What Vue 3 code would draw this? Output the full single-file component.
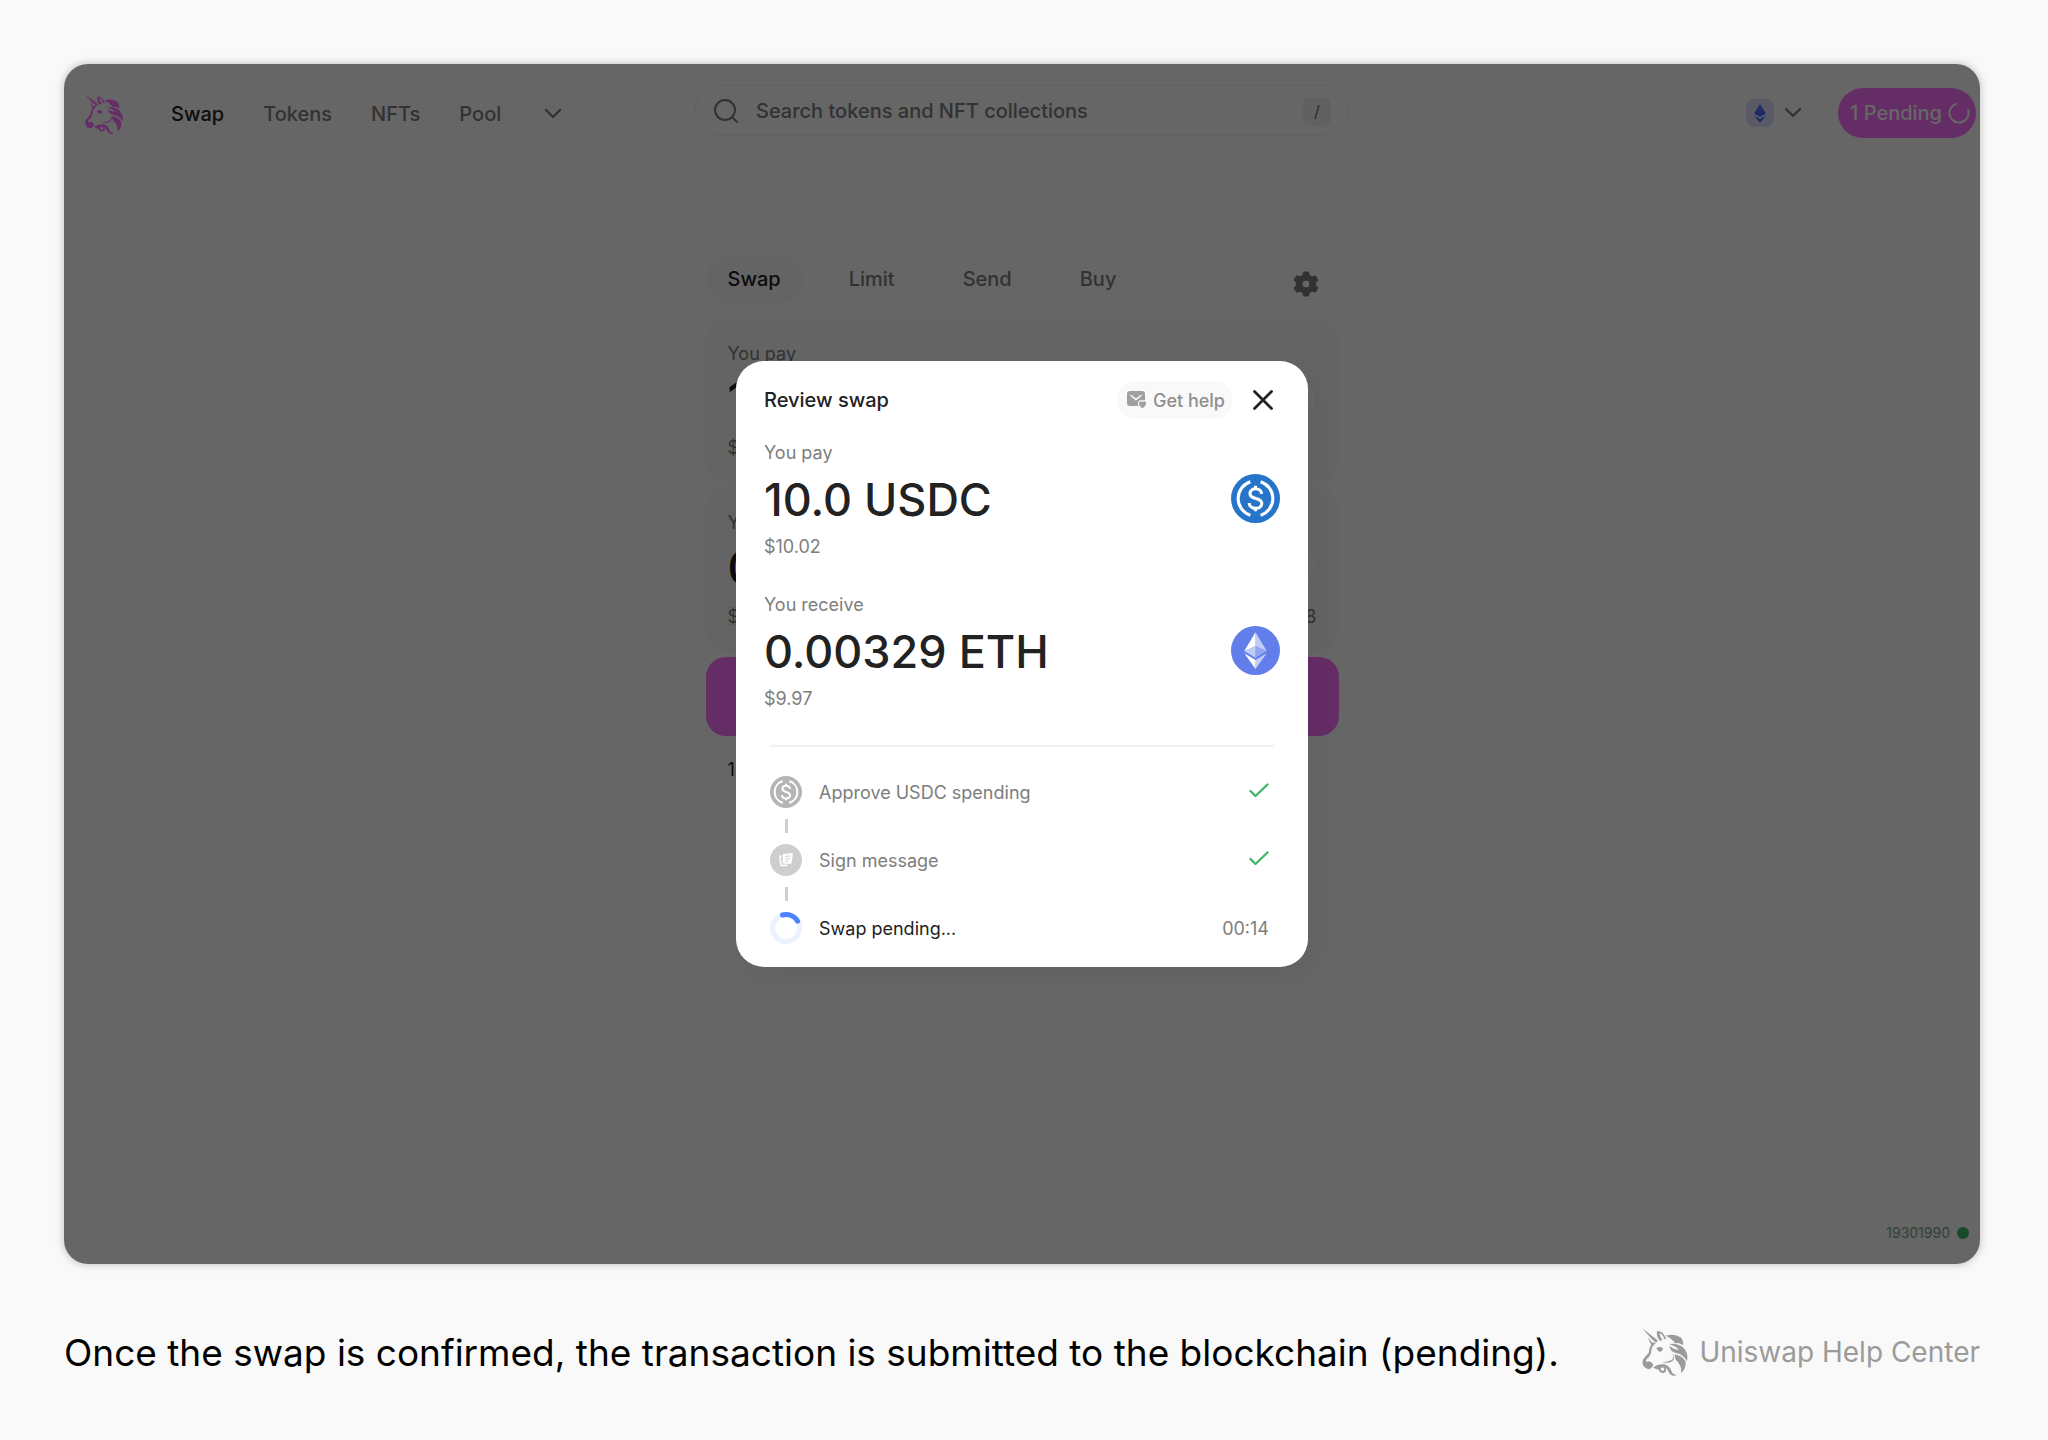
<template>
  <div class="page">
    <svg class="sprite" aria-hidden="true">
      <symbol id="unicorn" viewBox="12 8 134 142">
        <path d="M12 9 L57 44 Q58 49 51 51 Q45 45 39 40 Z"/>
        <path d="M28 37 L46 55 L39 58 Z"/>
        <path fill-rule="evenodd" d="M56 32 Q53 20 57 17 Q74 17 83 42 L76 40 Q74 28 63 23 Q62 30 72 44 L63 45 Q57 40 56 32 Z"/>
        <path d="M45 50 L52 54 Q44 58 40 67 L37 84 Q32 96 24 101 Q20 106 26 108 Q35 103 44 115 Q43 126 33 129 Q21 130 15 120 Q10 111 15 100 L31 81 Q33 60 45 50 Z"/>
        <path d="M54 68 Q62 61 73 68 Q72 78 62 78 Q56 76 54 68 Z"/>
        <path d="M80 31 Q106 23 126 36 Q134 45 133 59 Q121 51 109 53 Q98 38 80 31 Z"/>
        <path d="M92 55 Q120 52 135 68 Q149 84 144 106 Q133 86 112 82 Q95 78 92 61 Q106 72 121 73 Q110 61 92 55 Z"/>
        <path d="M107 86 Q131 90 140 108 Q142 128 127 141 Q129 117 110 101 Z"/>
        <path d="M101 82 Q113 104 94 109 Q84 112 70 110 Q91 107 100 101 Q105 96 101 82 Z"/>
        <path d="M44 125 Q55 114 77 115 Q92 119 97 133 Q101 146 114 147 Q98 154 90 139 Q84 126 81 125 Q86 138 75 141 Q63 142 60 131 Q52 131 44 125 Z M66 129 Q69 137 76 134 Q79 127 72 124 Q67 124 66 129 Z" fill-rule="evenodd"/>
      </symbol>
      <symbol id="chevron" viewBox="0 0 18 12">
        <path d="M2 2 L9 9 L16 2" fill="none" stroke="currentColor" stroke-width="2.4" stroke-linecap="round" stroke-linejoin="round"/>
      </symbol>
      <symbol id="usdc" viewBox="0 0 48 48">
        <circle cx="24" cy="24" r="24" fill="currentColor"/>
        <g fill="none" stroke="#fff" stroke-width="3">
          <path d="M19 7.6 A17.2 17.2 0 0 0 19 40.4 M29 7.6 A17.2 17.2 0 0 1 29 40.4"/>
          <path d="M30 19.5 C29.6 12.8 18.6 13 18.6 19 C18.6 26 30.2 21.8 30.2 29 C30.2 35.2 18 35.4 17.8 28.4 M24 11.5 V15.5 M24 32.5 V36.5"/>
        </g>
      </symbol>
    </svg>

    <main class="frame">
      <header class="nav">
        <nav class="nav__links">
          <a class="nav__logo" href="#" aria-label="Uniswap"><svg><use href="#unicorn"/></svg></a>
          <a v-for="link in links" :key="link" href="#" class="nav__link" :class="{ 'nav__link--active': link === 'Swap' }">{{ link }}</a>
          <button class="nav__more" aria-label="More"><svg width="18" height="12"><use href="#chevron"/></svg></button>
        </nav>
        <label class="search">
          <svg width="24" height="24" viewBox="0 0 24 24" fill="none" stroke="currentColor" stroke-width="2" stroke-linecap="round">
            <circle cx="11" cy="11" r="10"/>
            <path d="M18.5 18.5 L23 23"/>
          </svg>
          <input v-model="query" type="text" placeholder="Search tokens and NFT collections" aria-label="Search tokens and NFT collections">
          <kbd>/</kbd>
        </label>
        <div class="nav__side">
          <button class="network" aria-label="Ethereum network">
            <span class="network__icon">
              <svg width="12" height="19" viewBox="0 0 12 19" fill="#4c6fff">
                <path d="M6 0 L12 9.5 L6 13 L0 9.5 Z M0 11.5 L6 15 L12 11.5 L6 19 Z"/>
              </svg>
            </span>
            <svg width="18" height="12"><use href="#chevron"/></svg>
          </button>
          <button class="pending">
            1 Pending
            <svg width="22" height="22" viewBox="0 0 22 22" fill="none" stroke="currentColor" stroke-width="2" stroke-linecap="round">
              <path d="M8 2 A9.5 9.5 0 1 0 20 8"/>
            </svg>
          </button>
        </div>
      </header>

      <section class="swap">
        <div class="tabs">
          <button v-for="tab in tabs" :key="tab" class="tabs__item" :class="{ 'tabs__item--active': tab === 'Swap' }">{{ tab }}</button>
          <button class="tabs__settings" aria-label="Settings">
            <svg width="26" height="26" viewBox="0 0 26 26">
              <path fill="currentColor" fill-rule="evenodd" d="M10.5 1 H15.5 L16.3 4.3 L19 5.8 L22.3 4.8 L25 9.2 L22.6 11.5 V14.5 L25 16.8 L22.3 21.2 L19 20.2 L16.3 21.7 L15.5 25 H10.5 L9.7 21.7 L7 20.2 L3.7 21.2 L1 16.8 L3.4 14.5 V11.5 L1 9.2 L3.7 4.8 L7 5.8 L9.7 4.3 Z M13 9 A4 4 0 1 0 13 17 A4 4 0 1 0 13 9 Z" stroke="currentColor" stroke-width="1" stroke-linejoin="round"/>
            </svg>
          </button>
        </div>
        <div v-for="leg in legs" :key="leg.label" class="card">
          <span class="card__label">{{ leg.label }}</span>
          <div class="card__row card__row--amount">
            <input class="card__amount" type="text" :value="leg.amount" :aria-label="leg.label">
            <button class="card__token">{{ leg.symbol }}</button>
          </div>
          <div class="card__row card__label">
            <span>{{ leg.usd }}</span>
            <span v-if="leg.balance">{{ leg.balance }}</span>
          </div>
        </div>
        <button class="swap__submit">Swap</button>
        <p class="swap__rate">1 USDC</p>
      </section>

      <p class="block">19301990 <span class="block__dot"></span></p>

      <div class="overlay">
        <section class="modal" role="dialog" aria-labelledby="review-heading">
          <div class="modal__head">
            <h2 id="review-heading">Review swap</h2>
            <button class="help">
              <svg width="20" height="18" viewBox="0 0 20 18">
                <rect width="18" height="15" rx="3" fill="#a0a0a0"/>
                <path d="M4 4.5 L9 8.5 L14 4.5" fill="none" stroke="#fff" stroke-width="1.6" stroke-linecap="round"/>
                <path d="M15.5 18 C8.5 13.5 12 7.5 15.5 10.5 C19 7.5 22.5 13.5 15.5 18 Z" fill="#a0a0a0" stroke="#f9f9f9" stroke-width="1.2"/>
              </svg>
              Get help
            </button>
            <button class="modal__close" aria-label="Close">
              <svg width="20" height="20" viewBox="0 0 20 20" stroke="currentColor" stroke-width="2.8" stroke-linecap="round">
                <path d="M1.5 1.5 L18.5 18.5 M18.5 1.5 L1.5 18.5"/>
              </svg>
            </button>
          </div>

          <div v-for="leg in legs" :key="leg.label" class="leg">
            <div class="leg__info">
              <span class="leg__label">{{ leg.label }}</span>
              <span class="leg__amount">{{ leg.amount }} {{ leg.symbol }}</span>
              <span class="leg__label">{{ leg.usd }}</span>
            </div>
            <svg v-if="leg.symbol === 'USDC'" class="leg__coin leg__coin--usdc"><use href="#usdc"/></svg>
            <svg v-else class="leg__coin" viewBox="0 0 48 48">
              <circle cx="24" cy="24" r="24" fill="#627eea"/>
              <g fill="#fff">
                <path d="M24 6 L13 24.4 L24 19.5 Z"/>
                <path d="M24 6 L35 24.4 L24 19.5 Z" opacity=".6"/>
                <path d="M24 19.5 L13 24.4 L24 31 Z" opacity=".6"/>
                <path d="M24 19.5 L35 24.4 L24 31 Z" opacity=".3"/>
                <path d="M13 26.7 L24 33.2 V42 Z"/>
                <path d="M35 26.7 L24 33.2 V42 Z" opacity=".6"/>
              </g>
            </svg>
          </div>

          <ol class="steps">
            <li class="step">
              <svg class="step__icon step__icon--usdc"><use href="#usdc"/></svg>
              <span class="step__text">Approve USDC spending</span>
              <svg class="step__check" viewBox="0 0 20 15"><path d="M1.5 8 L6.5 13 L18.5 1.5"/></svg>
            </li>
            <li class="step">
              <svg class="step__icon" viewBox="0 0 32 32">
                <circle cx="16" cy="16" r="16" fill="#cecece"/>
                <path d="M11.5 12 L9.8 12.4 L11 21.5 L17.5 21.2" fill="none" stroke="#fff" stroke-width="1.6" stroke-linejoin="round"/>
                <path d="M13.5 10 L22 9 Q23 9 22.9 10 L21.5 19 Q21.2 20.2 20 20 L13.6 19.5 Q12.5 19.3 12.6 18 L12.7 11 Q12.8 10.1 13.5 10 Z" fill="#fff"/>
                <path d="M15.5 12.5 L20 12 M15.3 15 L19.6 14.6 M15.2 17.3 L18 17.2" fill="none" stroke="#cecece" stroke-width="1"/>
              </svg>
              <span class="step__text">Sign message</span>
              <svg class="step__check" viewBox="0 0 20 15"><path d="M1.5 8 L6.5 13 L18.5 1.5"/></svg>
            </li>
            <li class="step step--active">
              <svg class="step__icon" viewBox="0 0 32 32" fill="none" stroke-width="5">
                <circle cx="16" cy="16" r="13.5" stroke="#ecf2ff"/>
                <path d="M12.5 3 A13.5 13.5 0 0 1 27.7 9.2" stroke="#4c82fb" stroke-linecap="round"/>
              </svg>
              <span class="step__text">Swap pending...</span>
              <span class="step__time">00:14</span>
            </li>
          </ol>
        </section>
      </div>
    </main>

    <footer class="footer">
      <p class="footer__caption">Once the swap is confirmed, the transaction is submitted to the blockchain (pending).</p>
      <a class="footer__brand" href="#">
        <svg><use href="#unicorn"/></svg>
        Uniswap Help Center
      </a>
    </footer>
  </div>
</template>

<script setup>
import { ref } from 'vue'

const query = ref('')
const links = ['Swap', 'Tokens', 'NFTs', 'Pool']
const tabs = ['Swap', 'Limit', 'Send', 'Buy']
const legs = [
  { label: 'You pay', amount: '10.0', symbol: 'USDC', usd: '$10.02' },
  { label: 'You receive', amount: '0.00329', symbol: 'ETH', usd: '$9.97', balance: '8' }
]
</script>

<style>
body {
  margin: 0;
  background: #f9f9f9;
}
</style>

<style scoped>
.page {
  min-height: 100vh;
  box-sizing: border-box;
  padding: 64px 68px 0 64px;
  display: flex;
  flex-direction: column;
  font-family: Inter, "Liberation Sans", sans-serif;
  color: #222;
}
.page * {
  box-sizing: border-box;
}
.sprite {
  display: none;
}
button {
  border: none;
  background: none;
  padding: 0;
  font: inherit;
  color: inherit;
  cursor: pointer;
}
input {
  border: none;
  background: none;
  padding: 0;
  font: inherit;
  color: inherit;
  outline: none;
  min-width: 0;
}
a {
  color: inherit;
  text-decoration: none;
}
p, h2, ol {
  margin: 0;
  padding: 0;
}
.frame {
  position: relative;
  flex: 1;
  display: flex;
  flex-direction: column;
  background: #fff;
  border-radius: 24px;
  overflow: hidden;
  box-shadow: 0 0 8px rgba(0, 0, 0, 0.25);
}

/* Top bar */
.nav {
  display: grid;
  grid-template-columns: 1fr 654px 1fr;
  align-items: end;
  padding: 21px 4px 0;
  height: 74px;
  font-size: 20px;
  font-weight: 500;
  color: #7d7d7d;
}
.nav__links {
  display: flex;
  align-items: center;
  gap: 39px;
  height: 50px;
  padding: 2px 0 0 17px;
}
.nav__logo {
  display: flex;
  margin-right: 9px;
  color: #fc72ff;
}
.nav__logo svg {
  width: 38px;
  height: 42px;
  fill: currentColor;
}
.nav__link--active {
  color: #222;
}
.nav__more {
  display: flex;
  margin-left: 4px;
}
.search {
  display: flex;
  align-items: center;
  align-self: start;
  gap: 18px;
  height: 51px;
  padding: 0 17px 0 18px;
  border: 1px solid #f2f2f2;
  border-radius: 24px;
}
.search input {
  flex: 1;
}
.search input::placeholder {
  color: #7d7d7d;
  opacity: 1;
}
.search kbd {
  width: 28px;
  height: 28px;
  line-height: 28px;
  border-radius: 6px;
  background: #f2f2f2;
  font-family: inherit;
  font-size: 16px;
  text-align: center;
}
.nav__side {
  display: flex;
  justify-content: flex-end;
  align-items: center;
  gap: 36px;
}
.network {
  display: flex;
  align-items: center;
  gap: 10px;
}
.network__icon {
  display: flex;
  align-items: center;
  justify-content: center;
  width: 28px;
  height: 28px;
  border-radius: 8px;
  background: #dfe2ff;
}
.pending {
  display: flex;
  align-items: center;
  gap: 6px;
  height: 50px;
  padding: 0 6px 0 12px;
  border-radius: 25px;
  background: #fc72ff;
  color: #fff;
}

/* Swap form */
.swap {
  width: 633px;
  margin: 116px auto 0;
  display: flex;
  flex-direction: column;
  gap: 6px;
}
.tabs {
  display: flex;
  align-items: center;
  height: 50px;
  margin-bottom: 9px;
  font-size: 20px;
  font-weight: 500;
  color: #7d7d7d;
}
.tabs__item {
  height: 48px;
  padding: 0 22px;
  margin-right: 24px;
  border-radius: 24px;
}
.tabs__item--active {
  background: #f9f9f9;
  color: #222;
}
.tabs__settings {
  display: flex;
  margin-left: auto;
  margin-right: 20px;
  padding-top: 10px;
}
.card {
  display: flex;
  flex-direction: column;
  gap: 11px;
  padding: 23px 22px 22px;
  border-radius: 20px;
  background: #f9f9f9;
}
.card__label {
  line-height: 24px;
  font-size: 18px;
  color: #7d7d7d;
}
.card__row {
  display: flex;
  align-items: center;
  justify-content: space-between;
}
.card__row--amount {
  height: 42px;
  margin-bottom: 6px;
}
.card__amount {
  flex: 1;
  height: 42px;
  font-size: 45px;
  font-weight: 500;
}
.card__token {
  width: 130px;
  height: 48px;
  border: 1px solid #f2f2f2;
  border-radius: 24px;
  background: #fff;
}
.swap__submit {
  height: 79px;
  border-radius: 20px;
  background: #fc72ff;
  color: #fff;
  font-size: 20px;
}
.swap__rate {
  padding: 16px 22px;
  line-height: 24px;
  font-size: 18px;
}
.block {
  display: flex;
  align-items: center;
  justify-content: flex-end;
  gap: 7px;
  margin-top: auto;
  padding: 0 11px 22px;
  line-height: 18px;
  font-size: 14px;
  color: #76a885;
}
.block__dot {
  width: 12px;
  height: 12px;
  border-radius: 50%;
  background: #40b66b;
}

/* Review dialog */
.overlay {
  position: absolute;
  inset: 0;
  display: flex;
  align-items: center;
  justify-content: center;
  background: rgba(0, 0, 0, 0.6);
}
.modal {
  width: 572px;
  padding: 20px 28px 23px;
  border-radius: 28px;
  background: #fff;
  box-shadow: 8px 12px 24px rgba(0, 0, 0, 0.04);
}
.modal__head {
  display: flex;
  align-items: center;
  height: 38px;
  padding-right: 7px;
  margin-bottom: 22px;
}
.modal__head h2 {
  flex: 1;
  font-size: 20px;
  font-weight: 500;
}
.help {
  display: flex;
  align-items: center;
  gap: 6px;
  height: 38px;
  padding: 0 8px 0 10px;
  margin-right: 20px;
  border-radius: 19px;
  background: #f9f9f9;
  font-size: 18px;
  font-weight: 500;
  color: #8f8f8f;
}
.modal__close {
  display: flex;
}
.leg {
  display: flex;
  align-items: center;
  justify-content: space-between;
  margin-bottom: 34px;
}
.leg__info {
  display: flex;
  flex-direction: column;
  gap: 7px;
}
.leg__label {
  line-height: 24px;
  font-size: 18px;
  color: #7d7d7d;
}
.leg__amount {
  line-height: 56px;
  font-size: 45px;
  font-weight: 500;
}
.leg__coin {
  width: 49px;
  height: 49px;
  margin-bottom: 4px;
}
.leg__coin--usdc {
  color: #2775ca;
}
.steps {
  display: flex;
  flex-direction: column;
  gap: 36px;
  margin: 0 6px;
  padding: 29px 5px 0 0;
  border-top: 2px solid #f2f2f2;
  list-style: none;
}
.step {
  position: relative;
  display: flex;
  align-items: center;
  gap: 17px;
  height: 32px;
  font-size: 18px;
  color: #7d7d7d;
}
/* short line between two step icons */
.step + .step::before {
  content: "";
  position: absolute;
  top: -25px;
  left: 15px;
  width: 3px;
  height: 14px;
  background: #cecece;
}
.step--active {
  color: #222;
}
.step__icon {
  width: 32px;
  height: 32px;
}
.step__icon--usdc {
  color: #b5b5b5;
}
.step__text {
  flex: 1;
}
.step__check {
  width: 20px;
  height: 15px;
  margin-bottom: 4px;
  fill: none;
  stroke: #40b66b;
  stroke-width: 2.4;
  stroke-linecap: round;
  stroke-linejoin: round;
}
.step__time {
  color: #7d7d7d;
}

.footer {
  display: flex;
  align-items: center;
  justify-content: space-between;
  height: 176px;
}
.footer__caption {
  font-size: 37px;
  color: #000;
}
.footer__brand {
  display: flex;
  align-items: center;
  gap: 11px;
  font-size: 28px;
  color: #9b9b9b;
}
.footer__brand svg {
  width: 46px;
  height: 48px;
  fill: currentColor;
}
</style>
